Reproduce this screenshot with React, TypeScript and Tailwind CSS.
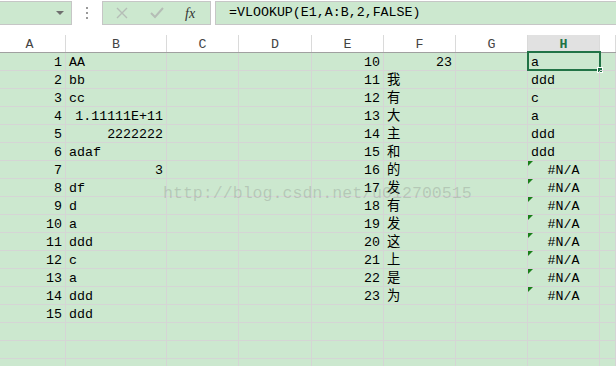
import React from 'react'

const COLS = [
  { key: 'A', w: 'w-[66px]' },
  { key: 'B', w: 'w-[101px]' },
  { key: 'C', w: 'w-[72px]' },
  { key: 'D', w: 'w-[73px]' },
  { key: 'E', w: 'w-[72px]' },
  { key: 'F', w: 'w-[72px]' },
  { key: 'G', w: 'w-[72px]' },
  { key: 'H', w: 'w-[72px]' },
  { key: '', w: 'w-[16px]' },
]

type Cell = { t: string; a?: 'l' | 'r' | 'c'; err?: boolean }

const F_CHARS = ['我', '有', '大', '主', '和', '的', '发', '有', '发', '这', '上', '是', '为']
const B_VALS: Cell[] = [
  { t: 'AA' },
  { t: 'bb' },
  { t: 'cc' },
  { t: '1.11111E+11', a: 'r' },
  { t: '2222222', a: 'r' },
  { t: 'adaf' },
  { t: '3', a: 'r' },
  { t: 'df' },
  { t: 'd' },
  { t: 'a' },
  { t: 'ddd' },
  { t: 'c' },
  { t: 'a' },
  { t: 'ddd' },
  { t: 'ddd' },
]
const H_VALS = ['a', 'ddd', 'c', 'a', 'ddd', 'ddd']

function rowData(i: number): Record<string, Cell> {
  const r: Record<string, Cell> = {}
  if (i < 15) {
    r.A = { t: String(i + 1), a: 'r' }
    r.B = B_VALS[i]
  }
  if (i < 14) {
    r.E = { t: String(i + 10), a: 'r' }
    r.F = i === 0 ? { t: '23', a: 'r' } : { t: F_CHARS[i - 1] }
    r.H = i < 6 ? { t: H_VALS[i] } : { t: '#N/A', a: 'c', err: true }
  }
  return r
}

const font = "font-['Liberation_Mono','Noto_Sans_CJK_SC',monospace]"

export default function App() {
  const rows = Array.from({ length: 18 }, (_, i) => rowData(i))
  return (
    <div className={`relative w-[616px] h-[366px] overflow-hidden bg-white text-black ${font}`}>
      {/* formula bar */}
      <div className="flex h-[35px] items-start pt-[1px]">
        <div className="flex h-[24px] w-[72px] items-center justify-end border border-l-0 border-[#c6c6c6] bg-[#cce8cf] pr-[7px]">
          <div className="h-0 w-0 border-x-[4px] border-t-[4px] border-x-transparent border-t-[#6f6f6f]" />
        </div>
        <div className="flex h-[24px] w-[30px] flex-col items-center justify-center gap-[3px]">
          <div className="h-[2px] w-[2px] bg-[#9a9a9a]" />
          <div className="h-[2px] w-[2px] bg-[#9a9a9a]" />
          <div className="h-[2px] w-[2px] bg-[#9a9a9a]" />
        </div>
        <div className="flex h-[24px] w-[109px] items-center border border-[#c6c6c6] bg-[#cce8cf]">
          <svg width="12" height="12" viewBox="0 0 12 12" className="ml-[13px]">
            <path d="M1 1 L11 11 M11 1 L1 11" stroke="#b5bdb6" strokeWidth="1.4" fill="none" />
          </svg>
          <svg width="14" height="12" viewBox="0 0 14 12" className="ml-[22px]">
            <path d="M1 6 L5 10 L13 1" stroke="#b5bdb6" strokeWidth="2" fill="none" />
          </svg>
          <span className="ml-[21px] font-['Liberation_Serif',serif] text-[14px] italic text-[#333]">fx</span>
        </div>
        <div className="ml-[4px] flex h-[24px] flex-1 items-center border border-r-0 border-[#c6c6c6] bg-[#cce8cf] pl-[13px] text-[13.3px]">
          =VLOOKUP(E1,A:B,2,FALSE)
        </div>
      </div>

      {/* column headers */}
      <div className="flex h-[18px] border-b border-[#a0a0a0] bg-white text-[13.3px] text-[#444]">
        {COLS.map((c) => (
          <div
            key={c.key || 'x'}
            className={`${c.w} shrink-0 border-r border-[#dadada] text-center leading-[17px] pt-[1px] ${
              c.key === 'H' ? 'bg-[#e1e1e1] font-bold text-[#217346]' : ''
            } ${c.key === 'A' ? 'pr-[6px]' : ''}`}
          >
            {c.key}
          </div>
        ))}
      </div>

      {/* grid */}
      <div className="bg-[#cce8cf] text-[13.3px]">
        {rows.map((r, i) => (
          <div key={i} className="flex h-[18px]">
            {COLS.map((c) => {
              const cell = r[c.key]
              const sel = i === 0 && c.key === 'H'
              return (
                <div
                  key={c.key || 'x'}
                  className={`${c.w} relative shrink-0 overflow-visible whitespace-nowrap border-r border-b border-[#d5d5d5] px-[3px] pt-[2px] leading-[16px] ${
                    cell?.a === 'r' ? 'text-right' : cell?.a === 'c' ? 'text-center' : 'text-left'
                  }`}
                >
                  {cell?.t}
                  {cell?.err && (
                    <div className="absolute left-0 top-0 h-0 w-0 border-r-[5px] border-t-[5px] border-r-transparent border-t-[#1a7f1a]" />
                  )}
                  {sel && (
                    <div className="absolute -left-[1px] -top-[2px] h-[20px] w-[74px] border-2 border-[#217346]">
                      <div className="absolute -bottom-[4px] -right-[4px] h-[6px] w-[6px] border border-white bg-[#217346]" />
                    </div>
                  )}
                </div>
              )
            })}
          </div>
        ))}
      </div>

      {/* watermark */}
      <div className="pointer-events-none absolute left-[163px] top-[182px] text-[16.6px] text-[rgba(120,120,120,0.28)]">
        http://blog.csdn.net/u012700515
      </div>
    </div>
  )
}
